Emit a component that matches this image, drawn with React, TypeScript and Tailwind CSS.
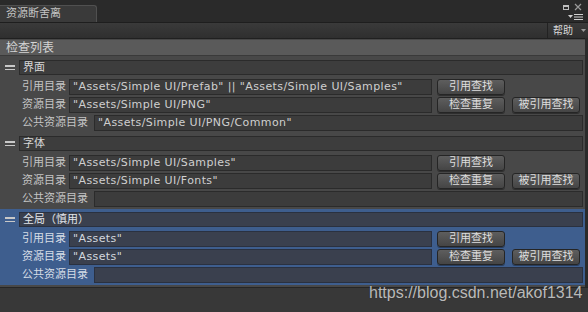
const font = "font-['DejaVu_Sans','Noto_Sans_CJK_SC',sans-serif]";

type Group = { title: string; refs: string; res: string; common: string; active?: boolean };

const groups: Group[] = [
  {
    title: '界面',
    refs: '"Assets/Simple UI/Prefab" || "Assets/Simple UI/Samples"',
    res: '"Assets/Simple UI/PNG"',
    common: '"Assets/Simple UI/PNG/Common"',
  },
  {
    title: '字体',
    refs: '"Assets/Simple UI/Samples"',
    res: '"Assets/Simple UI/Fonts"',
    common: '',
  },
  {
    title: '全局（慎用）',
    refs: '"Assets"',
    res: '"Assets"',
    common: '',
    active: true,
  },
];

function Field({ value, active, className }: { value: string; active?: boolean; className?: string }) {
  return (
    <div
      className={`h-[16px] border leading-[14px] pl-[3px] text-[11px] tracking-[0.4px] whitespace-nowrap overflow-hidden ${
        active ? 'bg-[#3a404e] border-[#2a3140] text-[#d4d8de]' : 'bg-[#3c3c3c] border-[#2b2b2b] text-[#cfcfcf]'
      } ${className ?? ''}`}
    >
      {value}
    </div>
  );
}

function Button({ label }: { label: string }) {
  return (
    <div className="w-[68px] h-[16px] rounded-[3px] border border-[#252525] bg-gradient-to-b from-[#5e5e5e] to-[#454545] text-[#dedede] text-[11px] leading-[14px] text-center shadow-[0_1px_0_rgba(0,0,0,0.35)]">
      {label}
    </div>
  );
}

function Label({ text, w, active }: { text: string; w: string; active?: boolean }) {
  return (
    <div className={`${w} pl-[3px] text-[11px] leading-[16px] whitespace-nowrap ${active ? 'text-[#d6dde6]' : 'text-[#c4c4c4]'}`}>
      {text}
    </div>
  );
}

function GroupBlock({ g }: { g: Group }) {
  return (
    <div className={`flex pt-[3px] pb-[2px] ${g.active ? 'bg-[#3e5e8e]' : ''}`}>
      <div className="w-[19px] flex flex-col items-center pt-[5px] gap-[2px]">
        <div className="w-[10px] h-[1.5px] bg-[#c8c8c8]" />
        <div className="w-[10px] h-[1.5px] bg-[#c8c8c8]" />
      </div>
      <div className="w-[564px] flex flex-col">
        <div
          className={`h-[15px] border leading-[13px] pl-[3px] text-[11px] ${
            g.active ? 'bg-[#3a404e] border-[#2a3140] text-[#e0e4ea]' : 'bg-[#3d3d3d] border-[#2b2b2b] text-[#d6d6d6]'
          }`}
        >
          {g.title}
        </div>
        <div className="flex flex-col gap-[2px] mt-[4px]">
          <div className="flex items-center">
            <Label text="引用目录" w="w-[50px]" active={g.active} />
            <Field value={g.refs} active={g.active} className="w-[363px]" />
            <div className="ml-[5px]">
              <Button label="引用查找" />
            </div>
          </div>
          <div className="flex items-center">
            <Label text="资源目录" w="w-[50px]" active={g.active} />
            <Field value={g.res} active={g.active} className="w-[363px]" />
            <div className="ml-[5px] flex gap-[7px]">
              <Button label="检查重复" />
              <Button label="被引用查找" />
            </div>
          </div>
          <div className="flex items-center">
            <Label text="公共资源目录" w="w-[75px]" active={g.active} />
            <Field value={g.common} active={g.active} className="flex-1" />
          </div>
        </div>
      </div>
    </div>
  );
}

export default function App() {
  return (
    <div className={`relative w-[588px] h-[312px] overflow-hidden bg-[#2a2a2a] ${font}`}>
      {/* Title bar */}
      <div className="h-[22px] flex items-end justify-between">
        <div className="w-[97px] h-[17px] bg-[#3a3a3a] border-t border-r border-[#505050] rounded-tr-[3px] pl-[6px] text-[11px] leading-[16px] text-[#c4c4c4]">
          资源断舍离
        </div>
        <div className="h-[22px] w-[30px] mr-[6px] flex flex-col items-end pt-[3px]">
          <div className="flex items-center gap-[5px]">
            <div className="w-[6px] h-[5px] border border-[#bdbdbd] border-t-2" />
            <svg width="8" height="8" viewBox="0 0 8 8">
              <path d="M1 1L7 7M7 1L1 7" stroke="#9a9a9a" strokeWidth="1.2" />
            </svg>
          </div>
          <div className="flex items-center gap-[1px] mt-[3px] mr-[-1px]">
            <svg width="5" height="4" viewBox="0 0 5 4">
              <path d="M0 0H5L2.5 3Z" fill="#cfcfcf" />
            </svg>
            <svg width="9" height="6" viewBox="0 0 9 6">
              <path d="M0 0.5H9M0 3H9M0 5.5H9" stroke="#cfcfcf" strokeWidth="1" />
            </svg>
          </div>
        </div>
      </div>

      {/* Toolbar */}
      <div className="h-[16px] bg-gradient-to-b from-[#3a3a3a] to-[#2f2f2f] border-t border-[#1e1e1e] flex justify-end">
        <div className="w-[41px] border-l border-[#222] flex items-center pl-[5px] gap-[8px] text-[10px] text-[#d8d8d8] leading-[14px]">
          <span>帮助</span>
          <svg width="5" height="4" viewBox="0 0 5 4">
            <path d="M0 0H5L2.5 3Z" fill="#9a9a9a" />
          </svg>
        </div>
      </div>

      {/* Main panel */}
      <div className="h-[249px] mr-[3px] bg-[#484848] border-t border-[#202020] pt-[1px]">
        <div className="h-[16px] bg-[#5a5a5a] border-b border-[#3a3a3a] pl-[6px] text-[12px] leading-[16px] text-[#d4d4d4]">
          检查列表
        </div>
        <div className="mt-[1px] flex flex-col">
          {groups.map((g) => (
            <GroupBlock key={g.title} g={g} />
          ))}
        </div>
      </div>

      {/* Bottom strip */}
      <div className="h-[25px] bg-[#383838] border-t border-[#262626]" />

      {/* Watermark */}
      <div className="absolute left-[369px] top-[281px] text-[16px] text-white/70 font-['Liberation_Sans',sans-serif] [text-shadow:0_0_1px_rgba(0,0,0,0.5)]">
        https://blog.csdn.net/akof1314
      </div>
    </div>
  );
}
